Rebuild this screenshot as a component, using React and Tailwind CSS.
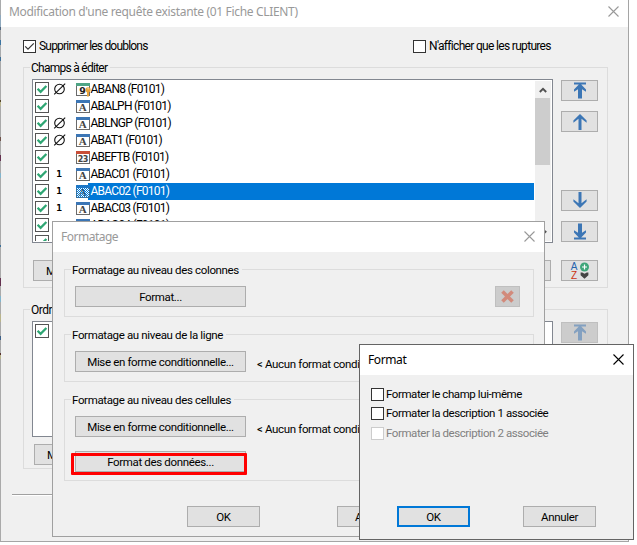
import clsx from "clsx";

const FIELDS = [
  { name: "ABAN8 (F0101)", mark: "empty", type: "key" },
  { name: "ABALPH (F0101)", type: "alpha" },
  { name: "ABLNGP (F0101)", mark: "empty", type: "alpha" },
  { name: "ABAT1 (F0101)", mark: "empty", type: "alpha" },
  { name: "ABEFTB (F0101)", type: "date" },
  { name: "ABAC01 (F0101)", mark: "one", type: "alpha" },
  { name: "ABAC02 (F0101)", mark: "one", type: "alpha", selected: true },
  { name: "ABAC03 (F0101)", mark: "one", type: "alpha" },
  { name: "ABAC04 (F0101)", mark: "one", type: "alpha" },
];

// Colours of what shows through on the left edge
const EDGE = [
  { height: "h-[15px]", color: "bg-[#a9abad]" },
  { height: "h-[12px]", color: "bg-[#8fa9bd]" },
  { height: "h-[3px]", color: "bg-[#4d6580]" },
  { height: "h-[10px]", color: "bg-[#a5a5a5]" },
  { height: "h-[5px]", color: "bg-[#3c74a0]" },
  { height: "h-[12px]", color: "bg-[#a9abad]" },
  { height: "h-[4px]", color: "bg-[#3f6f96]" },
  { height: "h-[39px]", color: "bg-[#aaaaaa]" },
  { height: "h-[2px]", color: "bg-[#55482c]" },
  { height: "h-[4px]", color: "bg-[#b9b48c]" },
  { height: "h-[31px]", color: "bg-[#aaaaaa]" },
  { height: "h-[4px]", color: "bg-[#6d5148]" },
  { height: "h-[14px]", color: "bg-[#aaaaaa]" },
  { height: "h-[6px]", color: "bg-[#63304f]" },
  { height: "h-[12px]", color: "bg-[#aaaaaa]" },
  { height: "h-[5px]", color: "bg-[#82b4cc]" },
  { height: "h-[67px]", color: "bg-[#aaaaaa]" },
  { height: "h-[2px]", color: "bg-[#3c6f98]" },
  { height: "h-[31px]", color: "bg-[#aaaaaa]" },
  { height: "h-[8px]", color: "bg-[#63304f]" },
  { height: "h-[10px]", color: "bg-[#aaaaaa]" },
  { height: "h-[6px]", color: "bg-[#82b4cc]" },
  { height: "h-[12px]", color: "bg-[#aaaaaa]" },
  { height: "h-[8px]", color: "bg-[#b9b48c]" },
  { height: "h-[14px]", color: "bg-[#aaaaaa]" },
  { height: "h-[4px]", color: "bg-[#3c5f88]" },
  { height: "h-[13px]", color: "bg-[#aaaaaa]" },
  { height: "h-[2px]", color: "bg-[#55302c]" },
  { height: "h-[4px]", color: "bg-[#b9b48c]" },
];

function CloseIcon({ className }) {
  return (
    <svg width="11" height="11" viewBox="0 0 11 11" className={className}>
      <path d="M0.5 0.5 L10.5 10.5 M10.5 0.5 L0.5 10.5" stroke="currentColor" strokeWidth="1.1" fill="none" />
    </svg>
  );
}

function CheckBox({ checked, disabled }) {
  return (
    <span
      className={clsx(
        "flex size-[13px] shrink-0 items-center justify-center border bg-white",
        disabled ? "border-[#cccccc]" : "border-[#333333]"
      )}
    >
      {checked && (
        <svg width="11" height="11" viewBox="0 0 11 11">
          <path d="M1.2 5.3 L4 8.1 L9.8 2.3" stroke="#333" strokeWidth="1.2" fill="none" />
        </svg>
      )}
    </span>
  );
}

function GreenCheck() {
  return (
    <span className="flex size-[14px] shrink-0 items-center justify-center border border-[#555555] bg-white">
      <svg width="12" height="12" viewBox="0 0 12 12">
        <path d="M1.6 5.8 L4.6 8.8 L10.4 3" stroke="#2ea673" strokeWidth="2.3" fill="none" />
      </svg>
    </span>
  );
}

function Mark({ kind }) {
  return (
    <span className="flex h-[17px] w-[13px] shrink-0 items-center justify-center">
      {kind === "empty" && (
        <svg width="13" height="13" viewBox="0 0 13 13">
          <circle cx="6.5" cy="6" r="4.8" stroke="#111" strokeWidth="1.1" fill="none" />
          <path d="M1.2 11.3 L12.2 0.6" stroke="#111" strokeWidth="1.1" />
        </svg>
      )}
      {kind === "one" && (
        <span className="-mt-[2px] -ml-px font-['DejaVu_Sans_Mono',monospace] text-[9.5px] leading-[17px] font-bold text-black">
          1
        </span>
      )}
    </span>
  );
}

function TypeIcon({ type, selected }) {
  const header = { key: "#4fa585", alpha: "#3c76b5", date: "#c94f38" }[type];

  return (
    <svg width="14" height="14" viewBox="0 0 14 14" className="shrink-0 overflow-visible">
      <rect x="0.5" y="1.5" width="13" height="12" fill="#fff" stroke="#6a6a6a" />
      <rect x="0" y="1" width="14" height="3" fill={header} />
      {type === "alpha" && (
        <text x="6.5" y="12.3" textAnchor="middle" fontFamily="Liberation Serif, serif" fontWeight="bold" fontSize="11" fill="#444">
          A
        </text>
      )}
      {type === "date" && (
        <text x="6.8" y="12" textAnchor="middle" fontFamily="DejaVu Sans, sans-serif" fontWeight="bold" fontSize="8" letterSpacing="-0.4" fill="#444">
          23
        </text>
      )}
      {type === "key" && (
        <>
          <text x="6.5" y="12.4" textAnchor="middle" fontFamily="DejaVu Sans, sans-serif" fontWeight="bold" fontSize="9.5" fill="#222">
            9
          </text>
          <circle cx="12" cy="7.8" r="2.6" fill="#e8a33c" />
          <rect x="11" y="9" width="2" height="5.5" fill="#e8a33c" />
          <rect x="11.6" y="6.3" width="1" height="1" fill="#fff" />
        </>
      )}
      {selected && (
        <>
          <defs>
            <pattern id="dither" width="2" height="2" patternUnits="userSpaceOnUse">
              <rect width="1" height="1" fill="#0078d7" />
              <rect x="1" y="1" width="1" height="1" fill="#0078d7" />
            </pattern>
          </defs>
          <rect y="1" width="14" height="13" fill="url(#dither)" shapeRendering="crispEdges" />
        </>
      )}
    </svg>
  );
}

function ArrowIcon({ down, bar }) {
  return (
    <svg width="14" height="17" viewBox="0 0 14 17" className={clsx(down && "rotate-180")}>
      {bar ? (
        <path d="M1 0.5 H13 V2.5 H8.2 L13 7.5 V9.8 L9 7.3 V16.5 H5 V7.3 L1 9.8 V7.5 L5.8 2.5 H1 Z" fill="#3c76b5" />
      ) : (
        <path d="M7 1 L13.6 7.6 V9.8 L8.5 5.8 V17 H5.5 V5.8 L0.4 9.8 V7.6 Z" fill="#3c76b5" />
      )}
    </svg>
  );
}

function SortIcon() {
  return (
    <span className="flex gap-[2px] font-['Liberation_Sans',sans-serif] text-[10px] leading-[9px] tracking-normal">
      <span className="flex w-[7px] flex-col">
        <span className="text-[#2764ae]">A</span>
        <span className="text-[#cc3311]">Z</span>
      </span>
      <svg width="9" height="18" viewBox="0 0 9 18">
        <circle cx="4.5" cy="5" r="4.5" fill="#3fa67a" />
        <path d="M4.5 2.5 V7.5 M2 5 H7" stroke="#fff" strokeWidth="1.2" />
        <path d="M0.6 10.5 H2.2 L4.5 11.8 L6.8 10.5 H8.4 V13.2 L4.5 16.8 L0.6 13.2 Z" fill="#444" />
      </svg>
    </span>
  );
}

function IconButton({ disabled, className, children }) {
  return (
    <button
      type="button"
      className={clsx(
        "flex h-[21px] shrink-0 items-center justify-center border",
        disabled ? "border-[#bfbfbf] bg-[#cccccc]" : "border-[#adadad] bg-[#e1e1e1]",
        className
      )}
    >
      <span className={clsx("flex", disabled && "opacity-50")}>{children}</span>
    </button>
  );
}

function Button({ primary, className, children }) {
  return (
    <button
      type="button"
      className={clsx(
        "flex h-[21px] shrink-0 items-center justify-center bg-[#e1e1e1] leading-[18px] whitespace-nowrap",
        primary ? "border-2 border-[#0078d7]" : "border border-[#adadad]",
        className
      )}
    >
      {children}
    </button>
  );
}

function GroupBox({ title, titleClass, className, children }) {
  return (
    <div className={clsx("border border-[#dcdcdc]", className)}>
      <div className={clsx("-mt-[9px] ml-[6px] h-[17px] w-fit bg-[#f0f0f0] pr-[3px] pl-px leading-[18px] whitespace-nowrap", titleClass)}>
        {title}
      </div>
      {children}
    </div>
  );
}

function FieldRow({ field }) {
  return (
    <div className="flex h-[17px] shrink-0 pl-px">
      <div className="pt-px">
        <GreenCheck />
      </div>
      <div className="ml-[4px] flex">
        <Mark kind={field.mark} />
      </div>
      <div className="z-10 ml-[10px] pt-px">
        <TypeIcon type={field.type} selected={field.selected} />
      </div>
      <div
        className={clsx(
          "-ml-[2px] flex-1 pl-[2.5px] text-[12px] leading-[17px] tracking-[-0.75px]",
          field.selected && "bg-[#0078d7] text-white"
        )}
      >
        {field.name}
      </div>
    </div>
  );
}

function Chevron({ down }) {
  return (
    <svg width="8" height="6" viewBox="0 0 8 6" className={clsx(down && "rotate-180")}>
      <path d="M0.8 5 L4 1.8 L7.2 5" stroke="#505050" strokeWidth="1.9" fill="none" />
    </svg>
  );
}

function ScrollBar() {
  return (
    <div className="flex w-[16px] shrink-0 flex-col bg-[#f0f0f0]">
      <div className="flex h-[17px] items-center justify-center">
        <Chevron />
      </div>
      <div className="h-[67px] w-[15px] bg-[#cdcdcd]" />
      <div className="flex-1" />
      <div className="flex h-[17px] items-center justify-center">
        <Chevron down />
      </div>
    </div>
  );
}

function QueryWindow() {
  return (
    <div className="isolate flex h-[542px] w-[629px] border-r border-b border-[#a5a5a5]">
      <div className="flex w-px shrink-0 flex-col bg-[#aaaaaa]">
        {EDGE.map((e, i) => (
          <div key={i} className={clsx("w-px shrink-0", e.height, e.color)} />
        ))}
      </div>
      <div className="flex min-w-0 flex-1 flex-col bg-[#f0f0f0]">
        <div className="flex h-[27px] shrink-0 items-start justify-between bg-white pr-[9px] pl-[8px] text-[#999999]">
          <span className="font-['Noto_Sans',sans-serif] text-[12px] leading-[24px] tracking-[-0.33px]">
            Modification d&apos;une requête existante (01 Fiche CLIENT)
          </span>
          <CloseIcon className="mt-[6px]" />
        </div>

        <div className="flex h-[40px] shrink-0 items-start pt-[10px] pl-[22px]">
          <div className="flex w-[390px] items-center gap-[3px] pt-[1px]">
            <CheckBox checked />
            <span className="text-[12px] leading-[16px] tracking-[-0.8px]">Supprimer les doublons</span>
          </div>
          <div className="flex items-center gap-[3px] pt-[1px]">
            <CheckBox />
            <span className="text-[12px] leading-[16px] tracking-[-0.68px]">N&apos;afficher que les ruptures</span>
          </div>
        </div>

        {/* Champs à éditer */}
        <GroupBox
          title="Champs à éditer"
          titleClass="text-[12px] tracking-[-0.73px]"
          className="ml-[22px] h-[221px] w-[585px] shrink-0"
        >
          <div className="mt-[3px] flex h-[164px] pl-[8px]">
            <div className="flex w-[521px] border border-[#828790] bg-white p-px">
              <div className="flex min-w-0 flex-1 flex-col overflow-hidden pr-px">
                {FIELDS.map((field) => (
                  <FieldRow key={field.name} field={field} />
                ))}
                <div className="h-[7px] shrink-0 overflow-hidden pt-px pl-px">
                  <GreenCheck />
                </div>
              </div>
              <ScrollBar />
            </div>
            <div className="ml-[8px] flex flex-col pt-px">
              <IconButton className="w-[37px]">
                <ArrowIcon bar />
              </IconButton>
              <IconButton className="mt-[10px] w-[37px]">
                <ArrowIcon />
              </IconButton>
              <IconButton className="mt-[58px] w-[37px]">
                <ArrowIcon down />
              </IconButton>
              <IconButton className="mt-[10px] w-[37px]">
                <ArrowIcon down bar />
              </IconButton>
            </div>
          </div>
          <div className="mt-[17px] flex pl-[9px]">
            <Button className="w-[73px]">Modifier...</Button>
            <Button className="ml-[372px] w-[73px]" />
            <IconButton className="ml-[10px] w-[37px]">
              <SortIcon />
            </IconButton>
          </div>
        </GroupBox>

        {/* Ordre */}
        <GroupBox
          title="Ordre"
          titleClass="text-[12px] tracking-[-0.5px]"
          className="mt-[21px] ml-[22px] h-[160px] w-[585px] shrink-0"
        >
          <div className="mt-[3px] flex h-[116px] pl-[8px]">
            <div className="flex w-[521px] gap-[3px] border border-[#828790] bg-white pt-[2px] pl-[2px]">
              <GreenCheck />
              <div className="mt-[3px] h-[3px] w-[14px] bg-[#4fa585]" />
            </div>
            <div className="ml-[8px] pt-px">
              <IconButton disabled className="w-[37px]">
                <ArrowIcon bar />
              </IconButton>
            </div>
          </div>
          <div className="mt-[7px] flex pl-[10px]">
            <Button className="w-[73px]">Modifier...</Button>
          </div>
        </GroupBox>

        <div className="mt-[25px] ml-[11px] h-[2px] w-[606px] border-t border-[#a0a0a0] bg-white" />
      </div>
    </div>
  );
}

function FormattingWindow() {
  return (
    <div className="absolute top-[221px] left-[52px] flex h-[316px] w-[493px] flex-col border border-[#a0a0a0] bg-[#f0f0f0]">
      <div className="flex h-[30px] shrink-0 items-start justify-between bg-white pr-[9px] pl-[8px] text-[#999999]">
        <span className="font-['Noto_Sans',sans-serif] text-[12px] leading-[30px] tracking-[-0.5px]">Formatage</span>
        <CloseIcon className="mt-[9px]" />
      </div>

      <div className="flex flex-col pt-[17px] pl-[11px]">
        <GroupBox title="Formatage au niveau des colonnes" className="h-[48px] w-[470px]">
          <div className="mt-[8px] flex justify-between pr-[13px] pl-[10px]">
            <Button className="w-[171px]">Format...</Button>
            <IconButton disabled className="w-[25px]">
              <svg width="13" height="13" viewBox="0 0 13 13">
                <path d="M1.5 1.5 L11.5 11.5 M11.5 1.5 L1.5 11.5" stroke="#d84a2c" strokeWidth="3.6" />
              </svg>
            </IconButton>
          </div>
        </GroupBox>

        <GroupBox title="Formatage au niveau de la ligne" className="mt-[17px] h-[48px] w-[470px]">
          <div className="mt-[8px] flex items-center gap-[11px] pl-[10px]">
            <Button className="w-[171px]">Mise en forme conditionnelle...</Button>
            <span className="pt-[4px] leading-[16px] whitespace-nowrap">&lt; Aucun format condi</span>
          </div>
        </GroupBox>

        <GroupBox title="Formatage au niveau des cellules" className="mt-[17px] h-[82px] w-[470px]">
          <div className="mt-[8px] flex items-center gap-[11px] pl-[10px]">
            <Button className="w-[171px]">Mise en forme conditionnelle...</Button>
            <span className="pt-[4px] leading-[16px] whitespace-nowrap">&lt; Aucun format condi</span>
          </div>
          <div className="relative mt-[14px] pl-[10px]">
            <Button className="w-[171px]">Format des données...</Button>
            <div className="absolute top-[2px] left-[6px] h-[22px] w-[176px] rounded-[1px] border-[3px] border-[#ff0000]" />
          </div>
        </GroupBox>
      </div>

      <div className="mt-[25px] flex gap-[77px] pl-[134px]">
        <Button className="w-[73px]">OK</Button>
        <Button className="w-[73px]">Annuler</Button>
      </div>
    </div>
  );
}

function FormatDialog() {
  return (
    <div className="absolute top-[344px] left-[359px] flex h-[196px] w-[275px] flex-col border border-[#646464] bg-[#f0f0f0]">
      <div className="flex h-[30px] shrink-0 items-start justify-between bg-white pr-[9px] pl-[8px]">
        <span className="font-['Noto_Sans',sans-serif] text-[12px] leading-[30px] tracking-[-0.4px]">Format</span>
        <CloseIcon className="mt-[9px]" />
      </div>

      <div className="flex flex-col pt-[9px] pl-[11px] tracking-[-0.42px]">
        <label className="flex h-[20px] items-center gap-[2px]">
          <CheckBox />
          <span className="pt-px">Formater le champ lui-même</span>
        </label>
        <label className="flex h-[19px] items-center gap-[2px]">
          <CheckBox />
          <span className="pt-px">Formater la description 1 associée</span>
        </label>
        <label className="flex h-[20px] items-center gap-[2px] text-[#808080]">
          <CheckBox disabled />
          <span className="pt-px">Formater la description 2 associée</span>
        </label>
      </div>

      <div className="mt-[63px] flex gap-[53px] pl-[37px]">
        <Button primary className="w-[73px]">
          OK
        </Button>
        <Button className="w-[73px]">Annuler</Button>
      </div>
    </div>
  );
}

function App() {
  return (
    <div className="relative h-[545px] w-[637px] overflow-hidden bg-white font-[Roboto,sans-serif] text-[11.5px] tracking-[-0.35px] text-black">
      <QueryWindow />
      <FormattingWindow />
      <FormatDialog />
    </div>
  );
}

export default App;
